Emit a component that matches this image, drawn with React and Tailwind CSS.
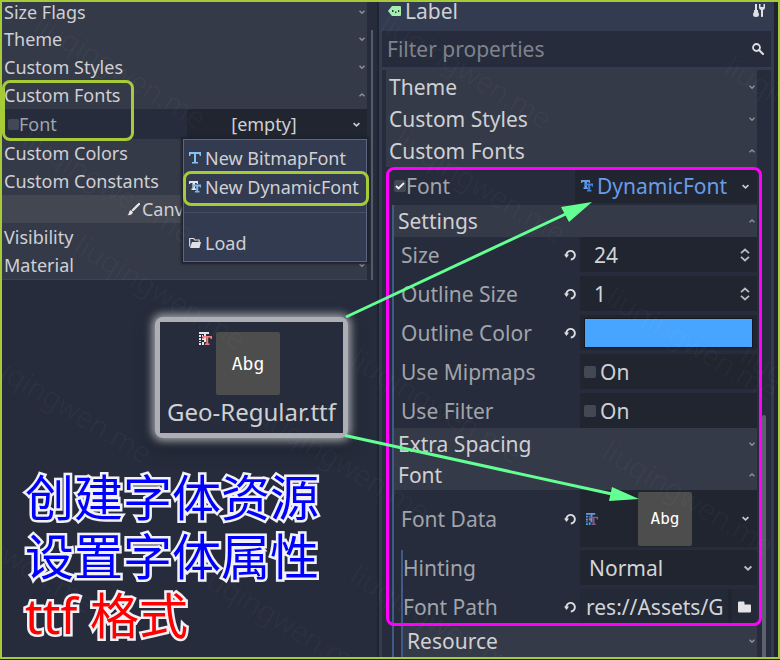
import React from "react";

const WATERMARKS = [
  [44, 5], [32, 120], [84, 226], [-10, 340], [-66, 490], [205, 554], [268, 398],
  [390, 5], [404, 120], [360, 340], [360, 556], [616, 278], [612, 432], [734, 48], [750, 336],
];

function Chevron({ up = false, size = 6, className = "text-[#8d9098]" }) {
  return (
    <svg width={size} height={size} viewBox="0 0 6 6" className={"shrink-0 " + className} fill="none" stroke="currentColor" strokeWidth="1.5" aria-hidden="true">
      <path d={up ? "M0.5 4.2 3 2 5.5 4.2" : "M0.5 1.8 3 4.2 5.5 1.8"} />
    </svg>
  );
}

function BitmapFontIcon() {
  return (
    <svg width="12" height="12" viewBox="0 0 12 12" className="shrink-0" fill="#84c2f5" aria-hidden="true">
      <path d="M0 0h12v4h-1l-1-2H7v8h2v1.5H3V10h2V2H2L1 4H0z" />
    </svg>
  );
}

function DynamicFontIcon({ back = "#e4e5e8", front = "#7ab8f0" }) {
  return (
    <svg width="12" height="12" viewBox="0 0 12 12" className="shrink-0" aria-hidden="true">
      <path d="M0 0h9v3H8L7.500 2H6v5.500h1V9H2.500V7.500h1V2H1.500L1 3H0z" fill={back} />
      <path d="M3.500 3.500H12V6.500h-1L10.500 5.500H9.200v4.500h1.300v1.500H6V10h1.200V5.500H5L4.500 6.500h-1z" fill={front} />
    </svg>
  );
}

function FontFileIcon({ back = "#e4e5e8", front = "#f47a78", size = 13 }) {
  return (
    <svg width={size} height={size} viewBox="0 0 13 13" className="shrink-0" aria-hidden="true">
      <path d="M0 0h10v2H0zM0 3h2v2H0zM3 3h1v2H3zM0 6h2v2H0zM3 6h2v2H3zM0 9h2v1H0zM0 11h2v2H0zM3 10h2v3H3zM5 2h2v8H5z" fill={back} />
      <path d="M3.500 4H13v3h-1.200L11 5.500H9.200v6h1.300V13H6v-1.500h1.300v-6H5.500L4.700 7H3.500z" fill={front} />
    </svg>
  );
}

function FolderOpenIcon() {
  return (
    <svg width="12" height="12" viewBox="0 0 12 12" className="shrink-0" aria-hidden="true">
      <path d="M0.700 9.500V1.500h4l1 1.500h4.500v2" fill="none" stroke="#dcdde0" strokeWidth="1.200" />
      <path d="M3 5h9l-1.500 6H1z" fill="#e0e1e4" />
    </svg>
  );
}

function FolderIcon() {
  return (
    <svg width="13" height="12" viewBox="0 0 13 12" aria-hidden="true">
      <path d="M0 1.500Q0 .5 1 .5h4.500q1 0 1 1V3.500H12q1 0 1 1v6q0 1-1 1H1q-1 0-1-1z" fill="#e4e4e6" />
    </svg>
  );
}

function ResetIcon() {
  return (
    <svg width="12" height="12" viewBox="0 0 12 12" aria-hidden="true">
      <path d="M2.300 6.500A4.300 4.300 0 1 1 6.800 10.500" fill="none" stroke="#dedfe2" strokeWidth="1.900" />
      <path d="M0 5.500h5L2.500 9z" fill="#dedfe2" />
    </svg>
  );
}

function SpinIcon() {
  return (
    <svg width="10" height="14" viewBox="0 0 10 14" fill="none" stroke="#b9bbc0" strokeWidth="1.800" aria-hidden="true">
      <path d="M1 5.200 5 1.500l4 3.700M1 8.800l4 3.700 4-3.700" />
    </svg>
  );
}

function Section({ title, open = false, className }) {
  return (
    <button type="button" aria-expanded={open} className={"flex w-full items-center justify-between bg-[#353a48] pr-0.5 text-left text-[#cfd0d4] " + className}>
      <span>{title}</span>
      <Chevron up={open} />
    </button>
  );
}

const LEFT = "h-7 pl-0.5";
const BOX = "appearance-none rounded-xs bg-[#434854]";

function Property({ label, id, reset = false, height = "h-[35px]", pad = "pl-[7px]", children }) {
  return (
    <div className={"flex items-center " + height + " " + pad}>
      <label htmlFor={id} className="flex-1 whitespace-nowrap text-[#a1a4aa]">{label}</label>
      {reset && (
        <button type="button" aria-label={"Reset " + label} className="mr-1 flex">
          <ResetIcon />
        </button>
      )}
      <div className="flex h-full w-[177px] items-center bg-[#202530]">{children}</div>
    </div>
  );
}

function NumberField({ id, value }) {
  return (
    <>
      <input id={id} defaultValue={value} inputMode="numeric" className="h-full w-full min-w-0 flex-1 bg-transparent pl-[14px] text-[#d3d4d7] outline-none" />
      <button type="button" aria-label="Change value" className="mr-[7px] flex"><SpinIcon /></button>
    </>
  );
}

function OnField({ id }) {
  return (
    <div className="flex items-center gap-1 pl-1">
      <input id={id} type="checkbox" className={"size-3 " + BOX} />
      <label htmlFor={id} className="text-[#cfd0d4]">On</label>
    </div>
  );
}

function NodeInspector() {
  return (
    <section className="flex w-[375px] shrink-0 flex-col bg-[#262c3b] text-[18px] leading-6">
      <div className="flex">
        <div className="min-w-0 flex-1 border-b border-[#3f4450]">
          <Section title="Size Flags" className="h-[23px] pb-1 pl-0.5" />
          <Section title="Theme" className={LEFT} />
          <Section title="Custom Styles" className={LEFT} />
          <Section title="Custom Fonts" open className={LEFT} />
          <div className="relative flex h-[30px] items-center pl-[6px]">
            <input id="left-font" type="checkbox" className={"size-[11px] " + BOX} />
            <label htmlFor="left-font" className="flex-1 text-[#a1a4aa]">Font</label>
            <button type="button" aria-haspopup="menu" className="flex h-full w-[180px] items-center bg-[#202530] pr-[7px] text-[#cfd0d4]">
              <span className="flex-1 pr-3">[empty]</span>
              <Chevron size={7} className="text-[#c8c9cd]" />
            </button>
            <div role="menu" className="absolute top-full right-0 z-10 w-[184px] border border-[#5b6680] bg-[#333b50] pt-[3px] pb-1 text-[#cfd0d4] shadow-[0_0_2px_2px_#1d222d]">
              <button type="button" role="menuitem" className="flex h-[29px] w-full items-center gap-1 pl-[5px] whitespace-nowrap"><BitmapFontIcon />New BitmapFont</button>
              <button type="button" role="menuitem" className="flex h-[29px] w-full items-center gap-1 pl-[5px] whitespace-nowrap"><DynamicFontIcon />New DynamicFont</button>
              <hr className="mt-[11px] mb-[15px] border-[#454d62]" />
              <button type="button" role="menuitem" className="flex h-[29px] w-full items-center gap-1 pl-[5px]"><FolderOpenIcon />Load</button>
            </div>
          </div>
          <Section title="Custom Colors" className={LEFT} />
          <Section title="Custom Constants" className={LEFT} />
          <div className="flex h-7 items-center justify-center gap-0.5 bg-[#424752] text-[#cfd0d4]">
            <svg width="13" height="13" viewBox="0 0 13 13" aria-hidden="true">
              <path d="M12 1 6 7" stroke="#e6e7ea" strokeWidth="2.400" strokeLinecap="round" />
              <path d="M3.800 7 6 9.200Q5 12.500.5 12.200 2 11 2 9.500 2.300 7.500 3.800 7z" fill="#e6e7ea" />
            </svg>
            CanvasItem
          </div>
          <Section title="Visibility" className={LEFT} />
          <Section title="Material" className={LEFT} />
        </div>
        <div className="flex w-[10px] justify-center pt-7">
          <div className="w-0.5 bg-[#555b69]" />
        </div>
      </div>
      <div className="flex flex-1 flex-col justify-end pb-3 pl-[23px]">
        <p className="font-['Noto_Sans','Noto_Sans_CJK_SC',sans-serif] text-[49px] leading-[59px] whitespace-nowrap text-[#0000ff] [paint-order:stroke_fill] [-webkit-text-stroke:5px_#f1f1f6]">
          创建字体资源<br />设置字体属性<br /><span className="text-[#ff0000]">ttf 格式</span>
        </p>
      </div>
    </section>
  );
}

function LabelInspector() {
  return (
    <section className="flex min-w-0 flex-1 flex-col border-r-4 border-l-2 border-[#1f2430] bg-[#333b50] px-[3px] text-[21px] leading-7">
      <header className="flex h-[29px] items-center gap-1 pr-1.5 pb-3 pl-1.5">
        <svg width="13" height="10" viewBox="0 0 13 10" aria-hidden="true">
          <path fillRule="evenodd" d="M4 0h8q1 0 1 1v8q0 1-1 1H4L0 5zM4 4v2h1.500V4zM7 5.500V7h1.500V5.500zM10 4v2h1.300V4z" fill="#a5efac" />
        </svg>
        <h1 className="flex-1 text-[#cfd0d4]">Label</h1>
        <button type="button" aria-label="Object tools">
          <svg width="12" height="14" viewBox="0 0 12 14" fill="#e0e1e4" aria-hidden="true">
            <path d="M2 0h2v6h1v2q1 1 1 2.500Q6 13 3 13T0 10.500Q0 9 1 8V6h1zM6 0v3.500Q6 5.500 8 6v6.500q1 1 2 0V6q2-.5 2-2.500V0h-1.500v3h-3V0z" />
          </svg>
        </button>
      </header>
      <div className="mb-[3px] flex h-9 items-center bg-[#262c3b] pr-[7px] pl-[5px]">
        <input aria-label="Filter properties" placeholder="Filter properties" className="min-w-0 flex-1 bg-transparent text-[#cfd0d4] outline-none placeholder:text-[#7f838d]" />
        <svg width="12" height="12" viewBox="0 0 12 12" fill="none" stroke="#dcdde0" aria-hidden="true">
          <circle cx="4.500" cy="4.500" r="3.500" strokeWidth="1.800" />
          <path d="m7 7 4 4" strokeWidth="2.200" strokeLinecap="round" />
        </svg>
      </div>
      <div className="flex flex-1 bg-[#262c3b] pl-1">
        <div className="min-w-0 flex-1">
          <div className="bg-[#353a48] pt-px">
            <Section title="Theme" className="h-8 pl-[3px]" />
            <Section title="Custom Styles" className="h-8 pl-[3px]" />
            <Section title="Custom Fonts" open className="h-8 pl-[3px]" />
          </div>
          <div className="flex h-[38px] items-center pl-2">
            <span className="relative flex">
              <input id="right-font" type="checkbox" defaultChecked className={"size-3 " + BOX} />
              <svg width="12" height="12" viewBox="0 0 12 12" fill="none" stroke="#f0f0f2" strokeWidth="1.800" className="pointer-events-none absolute inset-0" aria-hidden="true">
                <path d="m2 6 2.500 2.500L10 3" />
              </svg>
            </span>
            <label htmlFor="right-font" className="flex-1 text-[#a1a4aa]">Font</label>
            <button type="button" className="flex h-[34px] w-[182px] items-center gap-1 bg-[#202530] pr-2 pl-[6px] text-[#699ce8]">
              <DynamicFontIcon back="#699ce8" front="#3f82dc" />
              <span className="flex-1 text-left">DynamicFont</span>
              <Chevron size={7} className="text-[#c8c9cd]" />
            </button>
          </div>
          <div className="ml-1.5 border-l-2 border-[#3f5988]">
            <Section title="Settings" open className="h-8 pl-1" />
            <div className="flex flex-col gap-1">
              <Property label="Size" id="size" reset><NumberField id="size" value="24" /></Property>
              <Property label="Outline Size" id="outline-size" reset><NumberField id="outline-size" value="1" /></Property>
              <Property label="Outline Color" id="outline-color" reset>
                <button id="outline-color" type="button" aria-label="Outline Color #47a5ff" className="mr-1 ml-1 h-[30px] flex-1 border border-[#141820] bg-[#47a5ff]" />
              </Property>
              <Property label="Use Mipmaps" id="mipmaps"><OnField id="mipmaps" /></Property>
              <Property label="Use Filter" id="filter"><OnField id="filter" /></Property>
            </div>
            <Section title="Extra Spacing" className="h-[31px] pl-1" />
            <Section title="Font" open className="h-[31px] pl-1" />
            <Property label="Font Data" id="font-data" reset height="mb-[3px] h-[57px]">
              <button id="font-data" type="button" className="flex h-full w-full items-center pr-2 pl-1.5">
                <FontFileIcon back="#5d9be0" front="#8a5a86" size={12} />
                <span className="flex flex-1 justify-center pl-5">
                  <span className="mr-[30px] flex size-[54px] items-center justify-center rounded-xs bg-[#4d4d4d] font-['DejaVu_Sans_Mono',monospace] text-base text-white">Abg</span>
                </span>
                <Chevron size={7} className="text-[#c8c9cd]" />
              </button>
            </Property>
            <div className="ml-[7px] border-l-2 border-[#3f5988]">
              <Property label="Hinting" id="hinting" height="mb-1 h-[35px]" pad="pl-0">
                <select id="hinting" className="h-full min-w-0 flex-1 appearance-none bg-transparent pl-[9px] text-[#d3d4d7]">
                  <option>Normal</option>
                </select>
                <Chevron size={8} className="mr-[5px] text-[#b9bbc0]" />
              </Property>
              <Property label="Font Path" id="font-path" reset pad="pl-0">
                <input id="font-path" defaultValue="res://Assets/G" className="h-full min-w-0 flex-1 bg-[#232936] pl-1.5 text-[#d3d4d7] outline-none" />
                <button type="button" aria-label="Choose file" className="ml-1 flex h-full items-center bg-[#232936] px-1.5"><FolderIcon /></button>
              </Property>
              <Section title="Resource" className="h-[33px] pl-1" />
            </div>
          </div>
        </div>
        <div className="flex w-[14px] justify-center pt-[345px]">
          <div className="w-1 rounded-t-sm bg-[#5c616d]" />
        </div>
      </div>
    </section>
  );
}

export default function App() {
  return (
    <div className="bg-[#1d2230] pb-px font-['Noto_Sans',sans-serif]">
      <main className="relative flex overflow-hidden border-2 border-[#a6cb37]">
        <NodeInspector />
        <LabelInspector />

        <figure className="absolute top-[315px] left-[153px] w-[193px] rounded-lg bg-[#adafb4] p-[5px] text-[#cfd0d4] shadow-[0_0_8px_3px_#a0a3aa,0_8px_16px_4px_#1d222d]">
          <div className="bg-[#262c3b] pt-[10px] pb-1">
            <div className="flex justify-center gap-1 pr-6">
              <FontFileIcon />
              <div className="flex h-[63px] w-16 items-center justify-center rounded-xs bg-[#4d4d4d] font-['DejaVu_Sans_Mono',monospace] text-lg text-white">Abg</div>
            </div>
            <figcaption className="text-center text-[24px] leading-[34px] whitespace-nowrap">Geo-Regular.ttf</figcaption>
          </div>
        </figure>

        <div className="absolute top-[78px] left-0 h-[61px] w-[132px] rounded-lg border-3 border-[#a6cb37]" />
        <div className="absolute top-[169px] left-[181px] z-20 h-[35px] w-[186px] rounded-lg border-3 border-[#a6cb37]" />
        <div className="absolute top-[165px] left-[384px] h-[459px] w-[376px] rounded-lg border-3 border-[#ff00ff]" />

        <svg width="776" height="655" viewBox="2 2 776 655" className="pointer-events-none absolute top-0 left-0" fill="#63ff93" stroke="#63ff93" aria-hidden="true">
          <path d="M346 317 570 212M345 435.500 612 494" strokeWidth="3" />
          <path d="M592 202 561 207 569 222zM639 499 612 487 609 501z" stroke="none" />
        </svg>

        <div className="pointer-events-none absolute inset-0 z-30 text-[29px] leading-8 font-light text-white/4 select-none" aria-hidden="true">
          {WATERMARKS.map(([x, y]) => (
            <span key={x + "-" + y} className="absolute origin-top-left rotate-[31deg]" style={{ left: x, top: y }}>liuqingwen.me</span>
          ))}
        </div>
      </main>
    </div>
  );
}
